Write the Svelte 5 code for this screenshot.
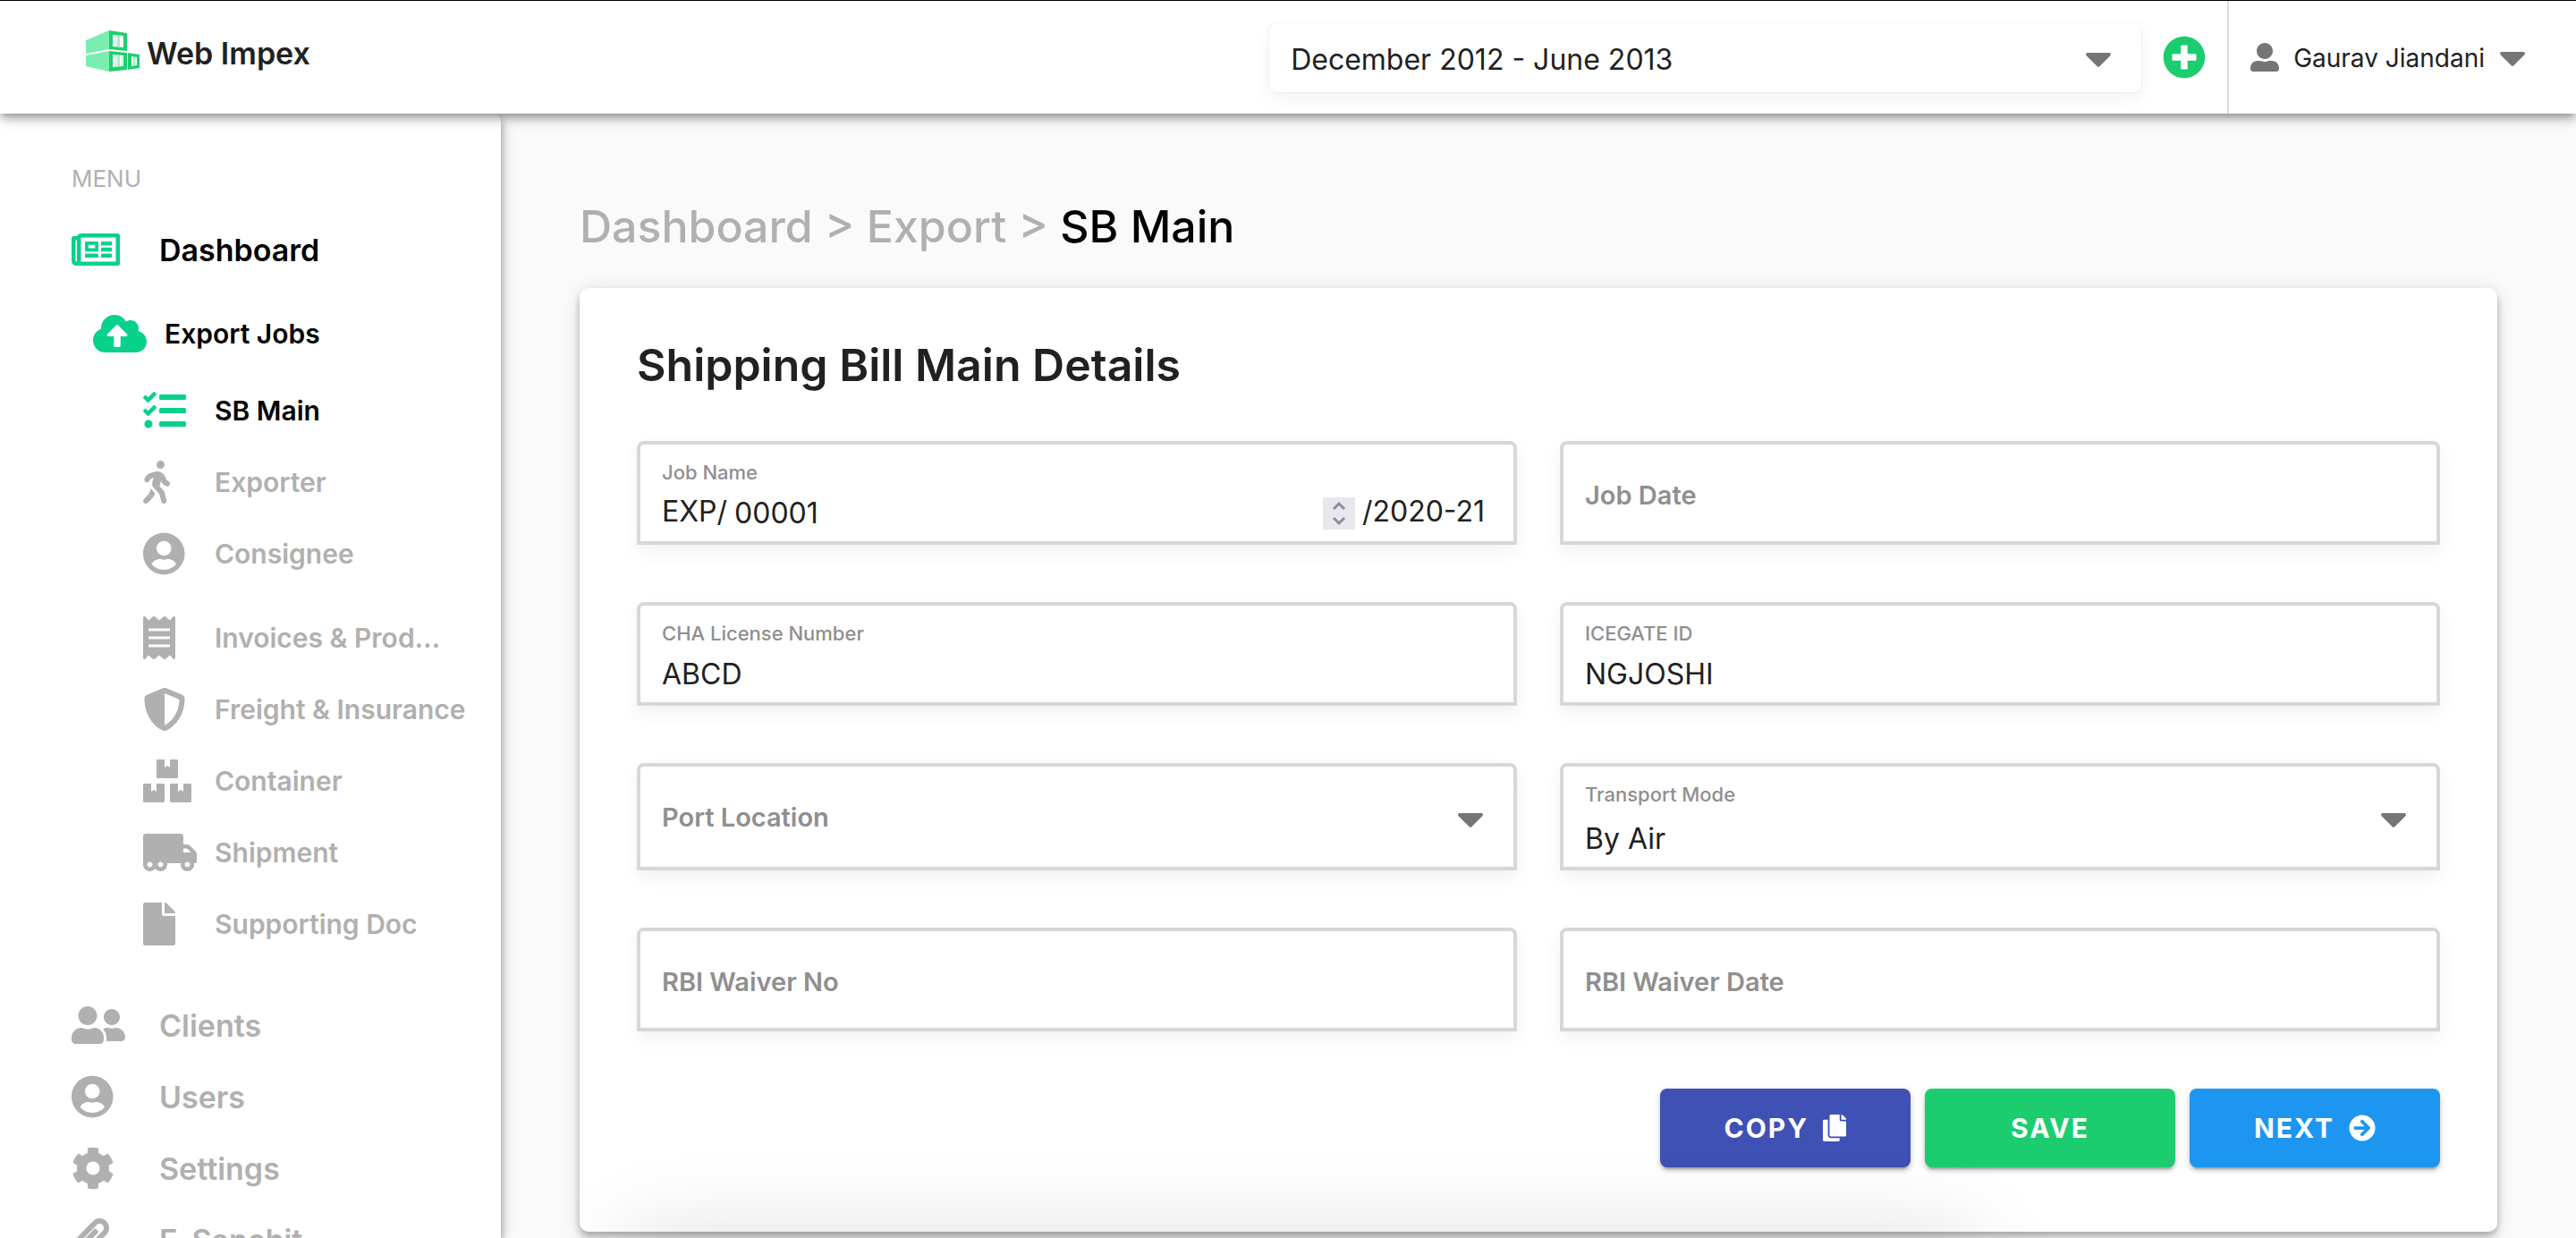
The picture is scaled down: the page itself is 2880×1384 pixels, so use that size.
<script>
  const icons = {
    newspaper: { w: 576, d: 'M552 64H112c-20.858 0-38.643 13.377-45.248 32H24c-13.255 0-24 10.745-24 24v272c0 30.928 25.072 56 56 56h496c13.255 0 24-10.745 24-24V88c0-13.255-10.745-24-24-24zM48 392V144h16v248c0 4.411-3.589 8-8 8s-8-3.589-8-8zm480 8H111.422c.374-2.614.578-5.283.578-8V112h416v288zM172 280h136c6.627 0 12-5.373 12-12v-96c0-6.627-5.373-12-12-12H172c-6.627 0-12 5.373-12 12v96c0 6.627 5.373 12 12 12zm28-80h80v40h-80v-40zm-40 140v-24c0-6.627 5.373-12 12-12h136c6.627 0 12 5.373 12 12v24c0 6.627-5.373 12-12 12H172c-6.627 0-12-5.373-12-12zm192 0v-24c0-6.627 5.373-12 12-12h104c6.627 0 12 5.373 12 12v24c0 6.627-5.373 12-12 12H364c-6.627 0-12-5.373-12-12zm0-144v-24c0-6.627 5.373-12 12-12h104c6.627 0 12 5.373 12 12v24c0 6.627-5.373 12-12 12H364c-6.627 0-12-5.373-12-12zm0 72v-24c0-6.627 5.373-12 12-12h104c6.627 0 12 5.373 12 12v24c0 6.627-5.373 12-12 12H364c-6.627 0-12-5.373-12-12z' },
    cloud: { w: 640, d: 'M537.6 226.6c4.1-10.7 6.4-22.4 6.4-34.6 0-53-43-96-96-96-19.7 0-38.1 6-53.3 16.2C367 64.2 315.3 32 256 32c-88.4 0-160 71.6-160 160 0 2.7.1 5.4.2 8.1C40.2 219.8 0 273.2 0 336c0 79.5 64.5 144 144 144h368c70.7 0 128-57.3 128-128 0-61.9-44-113.6-102.4-125.4zM393.4 288H328v112c0 8.8-7.2 16-16 16h-48c-8.8 0-16-7.2-16-16V288h-65.4c-14.3 0-21.4-17.2-11.3-27.3l105.4-105.4c6.2-6.2 16.4-6.2 22.6 0l105.4 105.4c10.1 10.1 2.9 27.3-11.3 27.3z' },
    tasks: { w: 512, d: 'M139.61 35.5a12 12 0 0 0-17 0L58.93 98.81l-22.7-22.12a12 12 0 0 0-17 0L3.53 92.41a12 12 0 0 0 0 17l47.59 47.4a12.78 12.78 0 0 0 17.61 0l15.59-15.62L156.52 69a12.09 12.09 0 0 0 .09-17zm0 159.19a12 12 0 0 0-17 0l-63.68 63.72-22.7-22.1a12 12 0 0 0-17 0L3.53 252a12 12 0 0 0 0 17L51 316.5a12.77 12.77 0 0 0 17.6 0l15.7-15.69 72.2-72.22a12 12 0 0 0 .09-16.9zM64 368c-26.49 0-48.59 21.5-48.59 48S37.53 464 64 464a48 48 0 0 0 0-96zm432 16H208a16 16 0 0 0-16 16v32a16 16 0 0 0 16 16h288a16 16 0 0 0 16-16v-32a16 16 0 0 0-16-16zm0-320H208a16 16 0 0 0-16 16v32a16 16 0 0 0 16 16h288a16 16 0 0 0 16-16V80a16 16 0 0 0-16-16zm0 160H208a16 16 0 0 0-16 16v32a16 16 0 0 0 16 16h288a16 16 0 0 0 16-16v-32a16 16 0 0 0-16-16z' },
    walking: { w: 320, d: 'M208 96c26.5 0 48-21.5 48-48S234.5 0 208 0s-48 21.5-48 48 21.5 48 48 48zm94.5 149.1l-23.3-11.8-9.7-29.4c-14.7-44.6-55.7-75.8-102.2-75.9-36-.1-55.9 10.1-93.3 25.2-21.6 8.7-39.3 25.2-49.7 46.2L17.6 213c-7.8 15.8-1.5 35 14.2 42.9 15.6 7.9 34.6 1.5 42.5-14.3L81 228c3.5-7 9.3-12.5 16.5-15.4l26.8-10.8-15.2 60.7c-5.2 20.8.4 42.9 14.9 58.8l59.9 65.4c7.2 7.9 12.3 17.4 14.9 27.7l18.3 73.3c4.3 17.1 21.7 27.6 38.8 23.3 17.1-4.3 27.6-21.7 23.3-38.8l-22.2-89c-2.6-10.3-7.7-19.9-14.9-27.7l-45.5-49.7 17.2-68.7 5.5 16.5c5.3 16.1 16.7 29.4 31.7 37l23.3 11.8c15.6 7.9 34.6 1.5 42.5-14.3 7.7-15.7 1.4-35.1-14.3-43zM73.6 385.8c-3.2 8.1-8 15.4-14.2 21.5l-50 50.1c-12.5 12.5-12.5 32.8 0 45.3s32.7 12.5 45.2 0l59.4-59.4c6.1-6.1 10.9-13.4 14.2-21.5l13.5-33.8c-55.3-60.3-38.7-41.8-47.4-53.7l-20.7 51.5z' },
    userCircle: { w: 496, d: 'M248 8C111 8 0 119 0 256s111 248 248 248 248-111 248-248S385 8 248 8zm0 96c48.6 0 88 39.4 88 88s-39.4 88-88 88-88-39.4-88-88 39.4-88 88-88zm0 344c-58.7 0-111.3-26.6-146.5-68.2 18.8-35.4 55.6-59.8 98.5-59.8 2.4 0 4.8.4 7.1 1.1 13 4.2 26.6 6.9 40.9 6.9 14.3 0 28-2.7 40.9-6.9 2.3-.7 4.7-1.1 7.1-1.1 42.9 0 79.7 24.4 98.5 59.8C359.3 421.4 306.7 448 248 448z' },
    receipt: { w: 384, d: 'M358.4 3.2L320 48 265.6 3.2a15.9 15.9 0 0 0-19.2 0L192 48 137.6 3.2a15.9 15.9 0 0 0-19.2 0L64 48 25.6 3.2C15-4.7 0 2.8 0 16v480c0 13.2 15 20.7 25.6 12.8L64 464l54.4 44.8a15.9 15.9 0 0 0 19.2 0L192 464l54.4 44.8a15.9 15.9 0 0 0 19.2 0L320 464l38.4 44.8c10.5 7.9 25.6.4 25.6-12.8V16c0-13.2-15-20.7-25.6-12.8zM320 360c0 4.4-3.6 8-8 8H72c-4.4 0-8-3.6-8-8v-16c0-4.4 3.6-8 8-8h240c4.4 0 8 3.6 8 8v16zm0-96c0 4.4-3.6 8-8 8H72c-4.4 0-8-3.6-8-8v-16c0-4.4 3.6-8 8-8h240c4.4 0 8 3.6 8 8v16zm0-96c0 4.4-3.6 8-8 8H72c-4.4 0-8-3.6-8-8v-16c0-4.4 3.6-8 8-8h240c4.4 0 8 3.6 8 8v16z' },
    shield: { w: 512, d: 'M466.5 83.7l-192-80a48.15 48.15 0 0 0-36.9 0l-192 80C27.7 91.1 16 108.6 16 128c0 198.5 114.5 335.7 221.5 380.3 11.8 4.9 25.1 4.9 36.9 0C360.1 472.6 496 349.3 496 128c0-19.4-11.7-36.9-29.5-44.3zM256.1 446.3l-.1-381 175.9 73.3c-3.3 151.4-82.1 261.1-175.8 307.7z' },
    boxes: { w: 576, d: 'M560 288h-80v96l-32-21.3-32 21.3v-96h-80c-8.8 0-16 7.2-16 16v192c0 8.8 7.2 16 16 16h224c8.8 0 16-7.2 16-16V304c0-8.8-7.2-16-16-16zm-384-64h224c8.8 0 16-7.2 16-16V16c0-8.8-7.2-16-16-16h-80v96l-32-21.3L256 96V0h-80c-8.8 0-16 7.2-16 16v192c0 8.8 7.2 16 16 16zm64 64h-80v96l-32-21.3L96 384v-96H16c-8.8 0-16 7.2-16 16v192c0 8.8 7.2 16 16 16h224c8.8 0 16-7.2 16-16V304c0-8.8-7.2-16-16-16z' },
    truck: { w: 640, d: 'M621.3 237.3l-58.5-58.5c-12-12-28.3-18.7-45.3-18.7H480V64c0-17.7-14.3-32-32-32H32C14.3 32 0 46.3 0 64v336c0 44.2 35.8 80 80 80 26.3 0 49.4-12.9 64-32.4 14.6 19.6 37.7 32.4 64 32.4 44.2 0 80-35.8 80-80 0-5.5-.6-10.8-1.6-16h163.2c-1.1 5.2-1.6 10.5-1.6 16 0 44.2 35.8 80 80 80s80-35.8 80-80c0-5.5-.6-10.8-1.6-16H624c8.8 0 16-7.2 16-16v-85.5c0-17-6.7-33.2-18.7-45.2zM80 432c-17.6 0-32-14.4-32-32s14.4-32 32-32 32 14.4 32 32-14.4 32-32 32zm128 0c-17.6 0-32-14.4-32-32s14.4-32 32-32 32 14.4 32 32-14.4 32-32 32zm272-224h37.5c4.3 0 8.3 1.7 11.3 4.7l43.3 43.3H480v-48zm48 224c-17.6 0-32-14.4-32-32s14.4-32 32-32 32 14.4 32 32-14.4 32-32 32z' },
    file: { w: 384, d: 'M224 136V0H24C10.7 0 0 10.7 0 24v464c0 13.3 10.7 24 24 24h336c13.3 0 24-10.7 24-24V160H248c-13.2 0-24-10.8-24-24zm160-14.1v6.1H256V0h6.1c6.4 0 12.5 2.5 17 7l97.9 98c4.5 4.5 7 10.6 7 16.9z' },
    friends: { w: 640, d: 'M192 256c61.9 0 112-50.1 112-112S253.9 32 192 32 80 82.1 80 144s50.1 112 112 112zm76.8 32h-8.3c-20.8 10-43.9 16-68.5 16s-47.6-6-68.5-16h-8.3C51.6 288 0 339.6 0 403.2V432c0 26.5 21.5 48 48 48h288c26.5 0 48-21.5 48-48v-28.8c0-63.6-51.6-115.2-115.2-115.2zM480 256c53 0 96-43 96-96s-43-96-96-96-96 43-96 96 43 96 96 96zm48 32h-3.8c-13.9 4.8-28.6 8-44.2 8s-30.3-3.2-44.2-8H432c-20.4 0-39.2 5.9-55.7 15.4 24.4 26.3 39.7 61.2 39.7 99.8v38.4c0 2.2-.5 4.3-.6 6.4H592c26.5 0 48-21.5 48-48 0-61.9-50.1-112-112-112z' },
    cog: { w: 512, d: 'M487.4 315.7l-42.6-24.6c4.3-23.2 4.3-47 0-70.2l42.6-24.6c4.9-2.8 7.1-8.6 5.5-14-11.1-35.6-30-67.8-54.7-94.6-3.8-4.1-10-5.1-14.8-2.3L380.8 110c-17.9-15.4-38.5-27.3-60.8-35.1V25.8c0-5.6-3.9-10.5-9.4-11.7-36.7-8.2-74.3-7.8-109.2 0-5.5 1.2-9.4 6.1-9.4 11.7V75c-22.2 7.9-42.8 19.8-60.8 35.1L88.7 85.5c-4.9-2.8-11-1.9-14.8 2.3-24.7 26.7-43.6 58.9-54.7 94.6-1.7 5.4.6 11.2 5.5 14L67.3 221c-4.3 23.2-4.3 47 0 70.2l-42.6 24.6c-4.9 2.8-7.1 8.6-5.5 14 11.1 35.6 30 67.8 54.7 94.6 3.8 4.1 10 5.1 14.8 2.3l42.6-24.6c17.9 15.4 38.5 27.3 60.8 35.1v49.2c0 5.6 3.9 10.5 9.4 11.7 36.7 8.2 74.3 7.8 109.2 0 5.5-1.2 9.4-6.1 9.4-11.7v-49.2c22.2-7.9 42.8-19.8 60.8-35.1l42.6 24.6c4.9 2.8 11 1.9 14.8-2.3 24.7-26.7 43.6-58.9 54.7-94.6 1.5-5.5-.7-11.3-5.6-14.1zM256 336c-44.1 0-80-35.9-80-80s35.9-80 80-80 80 35.9 80 80-35.9 80-80 80z' },
    clip: { w: 448, d: 'M43.246 466.142c-58.43-60.289-57.341-157.511 1.386-217.581L254.392 34c44.316-45.332 116.351-45.336 160.671 0 43.89 44.894 43.943 117.329 0 162.276L232.214 383.128c-29.855 30.537-78.633 30.111-107.982-.998-28.275-29.97-27.368-77.473 1.452-106.953l143.743-146.835c6.182-6.314 16.312-6.422 22.626-.241l22.861 22.379c6.315 6.182 6.422 16.312.241 22.626L171.427 319.927c-4.932 5.045-5.236 13.428-.648 18.292 4.372 4.634 11.245 4.711 15.688.165l182.849-186.851c19.613-20.062 19.613-52.725-.011-72.798-19.189-19.627-49.957-19.637-69.154 0L90.39 293.295c-34.763 35.56-35.299 93.12-1.191 128.313 34.01 35.093 88.985 35.137 123.058.286l172.06-175.999c6.177-6.319 16.307-6.433 22.626-.256l22.877 22.364c6.319 6.177 6.434 16.307.256 22.626l-172.06 175.998c-59.576 60.938-155.943 60.216-214.77-.485z' },
    user: { w: 512, d: 'M256 288c79.5 0 144-64.5 144-144S335.5 0 256 0 112 64.5 112 144s64.5 144 144 144zm128 32h-55.1c-22.2 10.2-46.9 16-72.9 16s-50.6-5.8-72.9-16H128C57.3 320 0 377.3 0 448v16c0 26.5 21.5 48 48 48h416c26.5 0 48-21.5 48-48v-16c0-70.7-57.3-128-128-128z' },
    plus: { w: 512, d: 'M256 8C119 8 8 119 8 256s111 248 248 248 248-111 248-248S393 8 256 8zm144 276c0 6.6-5.4 12-12 12h-92v92c0 6.6-5.4 12-12 12h-56c-6.6 0-12-5.4-12-12v-92h-92c-6.6 0-12-5.4-12-12v-56c0-6.6 5.4-12 12-12h92v-92c0-6.6 5.4-12 12-12h56c6.6 0 12 5.4 12 12v92h92c6.6 0 12 5.4 12 12v56z' },
    caret: { w: 320, d: 'M31.3 192h257.3c17.8 0 26.7 21.5 14.1 34.1L174.1 354.7c-7.8 7.8-20.5 7.8-28.3 0L17.2 226.1C4.6 213.5 13.5 192 31.3 192z' },
    copy: { w: 448, d: 'M320 448v40c0 13.255-10.745 24-24 24H24c-13.255 0-24-10.745-24-24V120c0-13.255 10.745-24 24-24h72v296c0 30.879 25.121 56 56 56h168zm0-344V0H152c-13.255 0-24 10.745-24 24v368c0 13.255 10.745 24 24 24h272c13.255 0 24-10.745 24-24V128H344c-13.2 0-24-10.8-24-24zm120.971-31.029L375.029 7.029A24 24 0 0 0 358.059 0H352v96h96v-6.059a24 24 0 0 0-7.029-16.97z' },
    arrow: { w: 512, d: 'M256 8c137 0 248 111 248 248S393 504 256 504 8 393 8 256 119 8 256 8zm-28.9 143.6l75.5 72.4H120c-13.3 0-24 10.7-24 24v16c0 13.3 10.7 24 24 24h182.6l-75.5 72.4c-9.7 9.3-9.9 24.8-.4 34.3l11 10.9c9.4 9.4 24.6 9.4 33.9 0L404.3 273c9.4-9.4 9.4-24.6 0-33.9L271.6 106.3c-9.4-9.4-24.6-9.4-33.9 0l-11 10.9c-9.5 9.6-9.3 25.1.4 34.4z' }
  };

  const jobSteps = [
    [
      { icon: 'tasks', label: 'SB Main', active: true },
      { icon: 'walking', label: 'Exporter' },
      { icon: 'userCircle', label: 'Consignee' }
    ],
    [
      { icon: 'receipt', label: 'Invoices & Prod…' },
      { icon: 'shield', label: 'Freight & Insurance' },
      { icon: 'boxes', label: 'Container' },
      { icon: 'truck', label: 'Shipment' },
      { icon: 'file', label: 'Supporting Doc' }
    ]
  ];

  const sections = [
    { icon: 'friends', label: 'Clients' },
    { icon: 'userCircle', label: 'Users' },
    { icon: 'cog', label: 'Settings' },
    { icon: 'clip', label: 'E-Sanchit' }
  ];

  const fields = [
    { id: 'job-date', label: 'Job Date', value: '' },
    { id: 'cha-license', label: 'CHA License Number', value: 'ABCD' },
    { id: 'icegate-id', label: 'ICEGATE ID', value: 'NGJOSHI' },
    { id: 'port-location', label: 'Port Location', value: '', options: ['', 'Mumbai', 'Chennai'] },
    { id: 'transport-mode', label: 'Transport Mode', value: 'By Air', options: ['By Air', 'By Sea'] },
    { id: 'rbi-waiver-no', label: 'RBI Waiver No', value: '' },
    { id: 'rbi-waiver-date', label: 'RBI Waiver Date', value: '' }
  ];

  let jobInput;
</script>

{#snippet icon(name)}
  <svg class="icon" viewBox="0 0 {icons[name].w} 512" aria-hidden="true"><path d={icons[name].d} /></svg>
{/snippet}

<div class="app">
  <header>
    <a class="brand" href="#home">
      <svg class="logo" viewBox="0 0 60 46" aria-hidden="true">
        <path fill="#7bedb0" d="M0 11 26 0v21L0 26zM0 28l26-5v23L0 40z" />
        <path fill="#1ecf6f" fill-rule="evenodd" d="M26 0l20 3v20l-20-2zm4 5v13l12 1V6zM26 23l20 2v19l-20 2zm4 4v14l12-1V28zM47 25l13 2v15l-13 2zm4 4v11l6-1v-9z" />
        <path fill="#a6efc6" d="M33 5h1v13h-1zM35 6h3v12h-3zM33 28h1v13h-1zM35 28h3v12h-3zM40 29h1v11h-1zM53 30h2v9h-2z" />
      </svg>
      <span>Web Impex</span>
    </a>
    <div class="period">
      <select aria-label="Financial period">
        <option>December 2012 - June 2013</option>
      </select>
      {@render icon('caret')}
    </div>
    <button class="add" aria-label="Add period">{@render icon('plus')}</button>
    <button class="account">
      {@render icon('user')}
      <span>Gaurav Jiandani</span>
      {@render icon('caret')}
    </button>
  </header>

  <div class="body">
    <nav>
      <p class="caption">MENU</p>
      <a class="top active" href="#dashboard"><span class="slot">{@render icon('newspaper')}</span>Dashboard</a>
      <a class="job active" href="#export"><span class="slot">{@render icon('cloud')}</span>Export Jobs</a>
      {#each jobSteps as group}
        <div class="group">
          {#each group as step}
            <a class="step" class:active={step.active} href="#step">
              <span class="slot">{@render icon(step.icon)}</span>{step.label}
            </a>
          {/each}
        </div>
      {/each}
      <div class="sections">
        {#each sections as section}
          <a class="top" href="#section"><span class="slot">{@render icon(section.icon)}</span>{section.label}</a>
        {/each}
      </div>
    </nav>

    <main>
      <div class="crumbs">
        <a href="#dashboard">Dashboard</a> &gt; <a href="#export">Export</a> &gt; <span>SB Main</span>
      </div>

      <form class="card">
        <h1>Shipping Bill Main Details</h1>
        <div class="grid">
          <div class="field filled">
            <label for="job-name">Job Name</label>
            <div class="job-number">
              <span class="affix">EXP/</span>
              <input id="job-name" type="number" value="00001" bind:this={jobInput} />
              <span class="spinner">
                <button type="button" aria-label="Increase" onclick={() => jobInput.stepUp()}>
                  <svg viewBox="0 0 16 10" aria-hidden="true"><path d="M2 9l6-6 6 6" /></svg>
                </button>
                <button type="button" aria-label="Decrease" onclick={() => jobInput.stepDown()}>
                  <svg viewBox="0 0 16 10" aria-hidden="true"><path d="M2 1l6 6 6-6" /></svg>
                </button>
              </span>
              <span class="affix">/2020-21</span>
            </div>
          </div>
          {#each fields as field}
            <div class="field" class:filled={field.value} class:choice={field.options}>
              <label for={field.id}>{field.label}</label>
              {#if field.options}
                <select id={field.id} value={field.value}>
                  {#each field.options as option}
                    <option value={option}>{option}</option>
                  {/each}
                </select>
                {@render icon('caret')}
              {:else}
                <input id={field.id} type="text" value={field.value} />
              {/if}
            </div>
          {/each}
        </div>
        <div class="actions">
          <button type="button" class="copy">COPY {@render icon('copy')}</button>
          <button type="button" class="save">SAVE</button>
          <button type="button" class="next">NEXT {@render icon('arrow')}</button>
        </div>
      </form>
    </main>
  </div>
</div>

<style>
  :global(body) {
    background: #fafafa;
  }
  .app {
    display: flex;
    flex-direction: column;
    height: 100vh;
    overflow: hidden;
    font-family: Inter, "Liberation Sans", sans-serif;
    font-size: 32px;
    color: #212121;
  }
  .app * {
    box-sizing: border-box;
  }
  a {
    color: inherit;
    text-decoration: none;
  }
  button,
  input,
  select {
    margin: 0;
    padding: 0;
    border: 0;
    background: none;
    font: inherit;
    color: inherit;
    outline: none;
  }
  button {
    cursor: pointer;
  }
  select {
    appearance: none;
  }
  .icon {
    display: block;
    flex: none;
    height: 48px;
    fill: currentColor;
  }

  header {
    position: relative;
    z-index: 2;
    flex: none;
    display: flex;
    align-items: center;
    height: 127px;
    border-top: 1px solid #000;
    background: #fff;
    box-shadow: 0 4px 8px -2px rgba(0, 0, 0, 0.3), 0 8px 10px rgba(0, 0, 0, 0.14), 0 2px 20px rgba(0, 0, 0, 0.12);
  }
  .brand {
    display: flex;
    align-items: flex-end;
    align-self: flex-start;
    gap: 8px;
    margin-right: auto;
    padding: 33px 0 0 96px;
    font-size: 34px;
    line-height: 40px;
    font-weight: 600;
  }
  .logo {
    width: 60px;
    height: 46px;
  }
  .period {
    position: relative;
    width: 975px;
    height: 77px;
    border-radius: 8px;
    box-shadow: 0 0 2px rgba(0, 0, 0, 0.12), 0 8px 20px rgba(0, 0, 0, 0.05);
  }
  .period select {
    width: 100%;
    height: 100%;
    padding: 4px 80px 0 24px;
  }
  .period .icon {
    position: absolute;
    top: 15px;
    right: 33px;
    color: #757575;
    pointer-events: none;
  }
  .add {
    margin: 0 24px;
    color: #1ccd70;
  }
  .account {
    display: flex;
    align-items: center;
    align-self: stretch;
    padding: 0 56px 0 24px;
    border-left: 2px solid #ddd;
    font-size: 28px;
    line-height: 40px;
  }
  .account .icon {
    color: #757575;
  }
  .account .icon:first-child {
    height: 32px;
  }
  .account span {
    padding: 2px 16px 0;
  }

  .body {
    flex: 1;
    display: flex;
    min-height: 0;
  }
  nav {
    position: relative;
    z-index: 1;
    flex: none;
    width: 560px;
    padding: 32px 0 0 80px;
    border-radius: 0 8px 0 0;
    background: #fff;
    color: #b0b0b0;
    box-shadow: 4px 4px 8px -2px rgba(0, 0, 0, 0.2), 0 8px 10px rgba(0, 0, 0, 0.14), 0 2px 20px rgba(0, 0, 0, 0.12);
  }
  .caption {
    margin: 0;
    padding-top: 2px;
    font-size: 26px;
    line-height: 78px;
  }
  nav a {
    display: flex;
    align-items: center;
    height: 80px;
    white-space: nowrap;
  }
  .slot {
    flex: none;
  }
  .top {
    font-size: 34px;
    font-weight: 600;
  }
  .top .slot {
    width: 98px;
  }
  .job,
  .step {
    font-size: 30px;
    font-weight: 600;
  }
  .job {
    margin-top: 14px;
    padding-left: 24px;
  }
  .job .slot {
    width: 80px;
  }
  .step {
    padding-left: 80px;
  }
  .step .slot {
    width: 80px;
  }
  .active {
    color: #000;
  }
  .active .icon {
    color: #08d18b;
  }
  .group {
    margin-top: 6px;
  }
  .group + .group {
    margin-top: 14px;
  }
  .sections {
    margin-top: 33px;
  }

  main {
    position: relative;
    flex: 1;
    min-width: 0;
    overflow: hidden;
    padding: 96px 88px 0;
  }
  /* Soft shade rising from the lower edge of the view */
  main::after {
    content: "";
    position: absolute;
    top: 100%;
    left: 6%;
    right: 29%;
    height: 200px;
    box-shadow: 0 0 100px rgba(0, 0, 0, 0.14);
    pointer-events: none;
  }
  .crumbs {
    margin-bottom: 39px;
    font-size: 50px;
    line-height: 60px;
    font-weight: 500;
    color: #b0b0b0;
  }
  .crumbs span {
    color: #000;
  }
  .card {
    padding: 56px 64px 72px;
    border-radius: 10px;
    background: #fff;
    box-shadow: 0 4px 8px -2px rgba(0, 0, 0, 0.2), 0 8px 10px rgba(0, 0, 0, 0.14), 0 2px 20px rgba(0, 0, 0, 0.12);
  }
  h1 {
    margin: 0 0 55px;
    font-size: 50px;
    line-height: 60px;
    font-weight: 600;
  }
  .grid {
    display: grid;
    grid-template-columns: 1fr 1fr;
    gap: 64px 48px;
  }
  .field {
    position: relative;
    display: grid;
    min-height: 116px;
    border: 4px solid #dad6d6;
    border-radius: 8px 8px 0 0;
    background: #fff;
    box-shadow: 0 8px 20px rgba(0, 0, 0, 0.06);
  }
  .choice {
    min-height: 120px;
  }
  .field label {
    grid-area: 1 / 1;
    align-self: start;
    padding: 39px 24px 0;
    font-size: 29px;
    line-height: 36px;
    font-weight: 600;
    color: #8f8f8f;
    pointer-events: none;
  }
  .field input,
  .field select {
    grid-area: 1 / 1;
    width: 100%;
    min-width: 0;
    padding: 0 24px;
  }
  .filled {
    grid-template-rows: 45px 1fr;
  }
  .field.filled label {
    padding-top: 17px;
    font-size: 22px;
    line-height: 28px;
    font-weight: 500;
  }
  .filled input,
  .filled select,
  .job-number {
    grid-area: 2 / 1;
  }
  .filled select {
    padding-top: 4px;
  }
  .choice .icon {
    position: absolute;
    top: 34px;
    right: 33px;
    color: #757575;
    pointer-events: none;
  }
  .job-number {
    display: flex;
    align-items: center;
    gap: 8px;
    padding: 0 32px 0 24px;
  }
  .job-number input {
    flex: 1;
    align-self: stretch;
    padding: 0;
    appearance: textfield;
  }
  .job-number input::-webkit-inner-spin-button {
    display: none;
  }
  .affix {
    padding-bottom: 4px;
  }
  .spinner {
    display: flex;
    flex-direction: column;
    width: 36px;
    height: 36px;
    background: #e8e7ed;
  }
  .spinner button {
    display: flex;
    flex: 1;
    align-items: center;
    justify-content: center;
  }
  .spinner svg {
    width: 16px;
    height: 10px;
    fill: none;
    stroke: #8e8c9c;
    stroke-width: 3;
  }

  .actions {
    display: flex;
    justify-content: flex-end;
    gap: 16px;
    margin-top: 64px;
  }
  .actions button {
    display: flex;
    align-items: center;
    justify-content: center;
    gap: 16px;
    width: 280px;
    height: 88px;
    border-radius: 8px;
    color: #fff;
    font-size: 30px;
    font-weight: 700;
    letter-spacing: 2px;
    box-shadow: 0 6px 2px -4px rgba(0, 0, 0, 0.2), 0 4px 4px rgba(0, 0, 0, 0.14), 0 2px 10px rgba(0, 0, 0, 0.12);
  }
  .actions .icon {
    height: 30px;
  }
  .actions .copy {
    background: #3f51b5;
  }
  .actions .save {
    background: #1ccd70;
  }
  .actions .next {
    background: #1c96f0;
  }
</style>
